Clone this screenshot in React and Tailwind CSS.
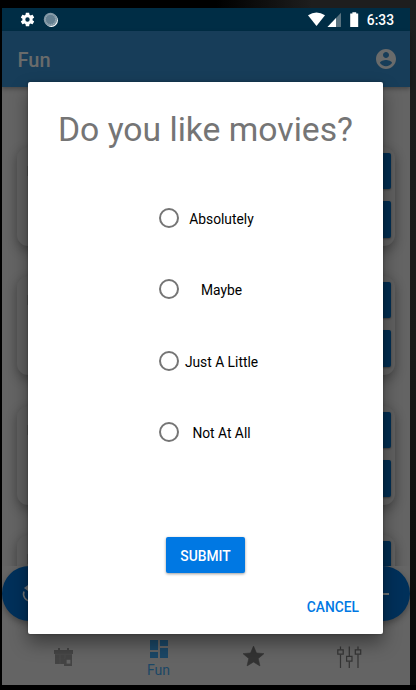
import React from "react";

const options = ["Absolutely", "Maybe", "Just A Little", "Not At All"];

function StatusBar() {
  return (
    <div className="relative z-10 flex h-[23px] shrink-0 items-center bg-[#002d45] text-white">
      <svg className="ml-[17px] h-[17px] w-[17px]" viewBox="0 0 24 24" fill="currentColor">
        <path d="M19.14 12.94c.04-.3.06-.61.06-.94 0-.32-.02-.64-.07-.94l2.03-1.58c.18-.14.23-.41.12-.61l-1.92-3.32c-.12-.22-.37-.29-.59-.22l-2.39.96c-.5-.38-1.03-.7-1.62-.94l-.36-2.54c-.04-.24-.24-.41-.48-.41h-3.84c-.24 0-.43.17-.47.41l-.36 2.54c-.59.24-1.13.57-1.62.94l-2.39-.96c-.22-.08-.47 0-.59.22L2.74 8.87c-.12.21-.08.47.12.61l2.03 1.58c-.05.3-.09.63-.09.94s.02.64.07.94l-2.03 1.58c-.18.14-.23.41-.12.61l1.92 3.32c.12.22.37.29.59.22l2.39-.96c.5.38 1.03.7 1.62.94l.36 2.54c.05.24.24.41.48.41h3.84c.24 0 .44-.17.47-.41l.36-2.54c.59-.24 1.13-.56 1.62-.94l2.39.96c.22.08.47 0 .59-.22l1.92-3.32c.12-.22.07-.47-.12-.61l-2.01-1.58zM12 15.1a3.1 3.1 0 1 1 0-6.2 3.1 3.1 0 0 1 0 6.2z" />
      </svg>
      <svg className="ml-[7px] h-4 w-4" viewBox="0 0 16 16">
        <circle cx="8.4" cy="8.4" r="6.5" fill="#fff" />
        <circle cx="7.5" cy="7.4" r="6.7" fill="#8398a5" />
        <circle cx="7.5" cy="7.4" r="5" fill="#647f90" stroke="#9fb0bb" strokeWidth="1" strokeDasharray="1 1" />
      </svg>
      <svg className="ml-auto h-[15px] w-[51px]" viewBox="0 0 51 15">
        <path d="M0 3.2Q8.5-2.2 17 3.2L8.5 14z" fill="#fff" />
        <path d="M33 .8V15H19.5z" fill="#58727f" />
        <path d="M28 6v9h-8.5z" fill="#fff" />
        <path d="M44.4.2h3.8v1.4h2V15h-8V1.6h2.2z" fill="#fff" />
      </svg>
      <span className="mr-[16px] ml-[8px] pt-[2px] text-[13.8px] leading-[23px] font-medium">6:33</span>
    </div>
  );
}

function AppBar() {
  return (
    <div className="relative z-10 flex h-14 shrink-0 items-center justify-between bg-[#173d59] pr-[12px] pl-[15.5px] text-[#696b6b] shadow-[0_2px_4px_rgba(0,0,0,0.3)]">
      <span className="pt-[2px] text-[20px] font-medium">Fun</span>
      <svg className="h-6 w-6" viewBox="0 0 24 24" fill="currentColor">
        <path d="M12 2C6.48 2 2 6.48 2 12s4.48 10 10 10 10-4.48 10-10S17.52 2 12 2zm0 3c1.66 0 3 1.34 3 3s-1.34 3-3 3-3-1.34-3-3 1.34-3 3-3zm0 14.2c-2.5 0-4.71-1.28-6-3.22.03-1.99 4-3.08 6-3.08 1.99 0 5.97 1.09 6 3.08-1.29 1.94-3.5 3.22-6 3.22z" />
      </svg>
    </div>
  );
}

function Card() {
  return (
    <div className="flex h-[99px] shrink-0 justify-between rounded-[11px] bg-[#606060] py-[6px] pr-1 pl-[10px] shadow-[0_4px_12px_rgba(0,0,0,0.33)]">
      <div className="mt-[13px] h-[10px] w-2 bg-[#505050]" />
      <div className="flex w-20 flex-col gap-3">
        <div className="h-9 rounded-[2px] bg-[#002d51] shadow-[0_1px_2px_rgba(0,0,0,0.35)]" />
        <div className="h-[37px] rounded-[2px] bg-[#002d51] shadow-[0_1px_2px_rgba(0,0,0,0.35)]" />
      </div>
    </div>
  );
}

function ActionBar() {
  return (
    <div className="relative z-10 flex h-16 shrink-0 justify-between bg-[#656565]">
      <div className="flex h-[55px] w-[55px] items-center rounded-full bg-[#00305a] pl-[17px] shadow-[0_3px_6px_rgba(0,0,0,0.3)]">
        <svg className="h-6 w-6" viewBox="0 0 24 24" fill="none" stroke="#6f7376" strokeWidth="1.6">
          <path d="M5 9.5A7.2 7.2 0 1 0 18.5 9.5" />
          <path d="M5 6 9 3V9z" fill="#6f7376" stroke="none" />
        </svg>
      </div>
      <div className="flex h-[55px] w-[55px] items-center justify-center rounded-full bg-[#00305a] shadow-[0_3px_6px_rgba(0,0,0,0.3)]">
        <div className="-ml-px h-[2px] w-[14px] bg-[#6f7376]" />
      </div>
    </div>
  );
}

function BottomNav() {
  return (
    <div className="grid h-[55px] shrink-0 grid-cols-[108px_83px_107px_84px] bg-[#646464] pl-[7px]">
      <div className="flex items-center justify-center">
        <svg className="h-[19px] w-[19px]" viewBox="0 0 19 19">
          <path d="M0 2h4V0h2v2h7V0h2v2h4v4h-1v12h-8v-2H1V6H0z" fill="#444" />
          <path d="M1 6.3h17M6 7v9M11 7v4" stroke="#505050" strokeWidth=".6" />
          <rect x="11.8" y="11" width="5.4" height="5.4" fill="#646464" stroke="#444" strokeWidth="1.6" />
        </svg>
      </div>
      <div className="flex flex-col items-center pt-[7px] text-[#1b4766]">
        <svg className="h-6 w-6" viewBox="0 0 24 24" fill="currentColor">
          <path d="M3 13h8V3H3v10zm0 8h8v-6H3v6zm10 0h8V11h-8v10zm0-18v6h8V3h-8z" />
        </svg>
        <span className="text-[14px] leading-[18px]">Fun</span>
      </div>
      <div className="flex items-start justify-center pt-[14px]">
        <svg className="h-[25px] w-[25px]" viewBox="0 0 24 24" fill="#333" stroke="#333" strokeWidth=".6">
          <path d="M12 17.27 18.18 21l-1.64-7.03L22 9.24l-7.19-.61L12 2 9.19 8.63 2 9.24l5.46 4.73L5.82 21z" />
        </svg>
      </div>
      <div className="flex items-start justify-center pt-4">
        <svg className="h-[23px] w-[25px]" viewBox="0 0 25 23" fill="none" stroke="#343434" strokeWidth="1.2">
          <path d="M3.5 .5v3m0 5v13.5M12.3 .5v10m0 5v6.5M21 .5v3m0 5v13.5" />
          <path d="M.8 3.9h5.4v4.2H.8zM9.6 10.4h5.4v4.8H9.6zM18.3 3.9h5.4v4.2h-5.4z" />
        </svg>
      </div>
    </div>
  );
}

function Dialog() {
  return (
    <div
      role="dialog"
      className="absolute top-[82px] left-[28px] z-20 flex h-[552px] w-[355px] flex-col rounded-[2px] bg-white shadow-[0_9px_18px_rgba(0,0,0,0.4),0_0_2px_1px_rgba(0,0,0,0.15)]"
    >
      <h1 className="mt-[26px] text-center text-[33.7px] leading-[43px] whitespace-nowrap text-[#757575]">
        Do you like movies?
      </h1>
      <div className="mt-[31.3px] flex flex-col">
        {options.map((label) => (
          <label key={label} className="flex h-[71.4px] items-center pl-[131px]">
            <span className="h-5 w-5 rounded-full border-2 border-[#757575]" />
            <span className="ml-1 w-[77px] pt-[2px] text-center text-[13.8px] leading-5 text-black">{label}</span>
          </label>
        ))}
      </div>
      <button className="mt-[69.1px] ml-[138px] h-9 w-[79px] shrink-0 rounded-[2px] bg-[#0078e3] pt-[3px] text-[13.8px] font-medium text-white shadow-[0_1px_3px_rgba(0,0,0,0.4)]">
        SUBMIT
      </button>
      <button className="mt-6 mr-6 self-end text-[13.8px] leading-5 font-medium text-[#0078e3]">CANCEL</button>
    </div>
  );
}

export default function App() {
  return (
    <div className="relative h-[690px] w-[416px] overflow-hidden bg-[linear-gradient(180deg,#1e1e1e,#1a1a18_50%,#080808)] font-[Roboto,sans-serif]">
      <div className="h-2 bg-[linear-gradient(90deg,#000_52%,#1e1e1e_75%)]" />
      <div className="flex h-[677px] w-[410px] flex-col border-l-2 border-black bg-[#646464]">
        <StatusBar />
        <AppBar />
        <div className="flex min-h-0 flex-1 flex-col gap-[30.3px] overflow-hidden pt-[60px] pr-[15px] pl-[15px]">
          <Card />
          <Card />
          <Card />
          <Card />
        </div>
        <ActionBar />
        <BottomNav />
      </div>
      <div className="h-[5px] bg-black" />
      <Dialog />
    </div>
  );
}
